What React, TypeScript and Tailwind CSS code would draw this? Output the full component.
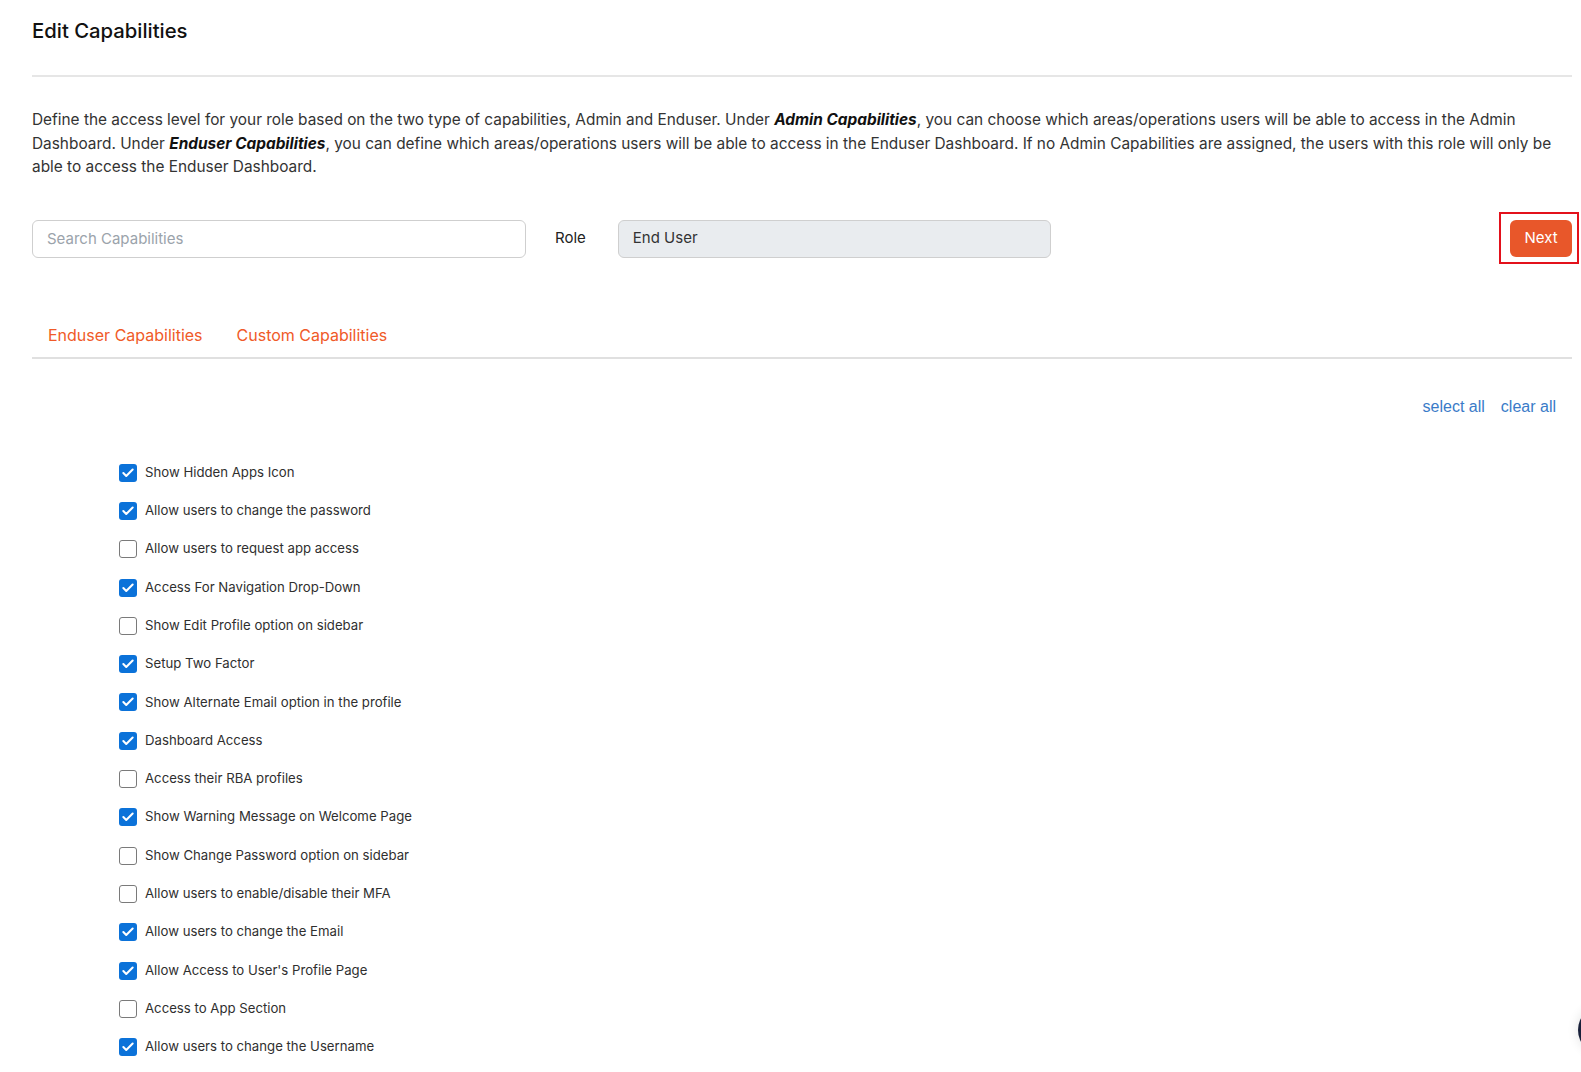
import { useState } from 'react';
import { Check } from 'lucide-react';

const capabilities = [
    { id: 'hidden_apps', label: 'Show Hidden Apps Icon', checked: true },
    { id: 'change_password', label: 'Allow users to change the password', checked: true },
    { id: 'request_app', label: 'Allow users to request app access', checked: false },
    { id: 'nav_dropdown', label: 'Access For Navigation Drop-Down', checked: true },
    { id: 'edit_profile_sidebar', label: 'Show Edit Profile option on sidebar', checked: false },
    { id: 'two_factor', label: 'Setup Two Factor', checked: true },
    { id: 'alt_email', label: 'Show Alternate Email option in the profile', checked: true },
    { id: 'dashboard', label: 'Dashboard Access', checked: true },
    { id: 'rba_profiles', label: 'Access their RBA profiles', checked: false },
    { id: 'warning_msg', label: 'Show Warning Message on Welcome Page', checked: true },
    { id: 'change_password_sidebar', label: 'Show Change Password option on sidebar', checked: false },
    { id: 'toggle_mfa', label: 'Allow users to enable/disable their MFA', checked: false },
    { id: 'change_email', label: 'Allow users to change the Email', checked: true },
    { id: 'profile_page', label: "Allow Access to User's Profile Page", checked: true },
    { id: 'app_section', label: 'Access to App Section', checked: false },
    { id: 'change_username', label: 'Allow users to change the Username', checked: true },
];

function CapabilityCheckbox({ label, checked, onToggle }: { label: string; checked: boolean; onToggle: () => void }) {
    return (
        <label className="h-[38.3px] flex items-center gap-[8px] cursor-pointer select-none">
            <span
                onClick={onToggle}
                className={
                    checked
                        ? 'w-[18px] h-[18px] rounded-[3px] bg-[#0b72d9] flex items-center justify-center'
                        : 'w-[18px] h-[18px] rounded-[3px] border border-[#7a7a7a] bg-white'
                }
            >
                {checked && <Check size={14} strokeWidth={3.5} className="text-white" />}
            </span>
            <span className="text-[13.2px] text-[#2f2f2f]">{label}</span>
        </label>
    );
}

export default function App() {
    const [items, setItems] = useState(capabilities);
    const [tab, setTab] = useState<'enduser' | 'custom'>('enduser');

    const toggle = (id: string) =>
        setItems((prev) => prev.map((c) => (c.id === id ? { ...c, checked: !c.checked } : c)));

    return (
        <div className="relative h-[1072px] overflow-hidden bg-white font-['Inter',sans-serif] text-[#222]">
            <div className="pl-8 pr-[9px]">
                <header className="pt-[17px] pb-[30px] border-b-2 border-[#e6e6e6]">
                    <h1 className="text-[20.3px] leading-7 text-[#111] font-medium">Edit Capabilities</h1>
                </header>

                <p className="mt-[31px] text-[15.4px] leading-[23.5px] text-[#333]">
                    Define the access level for your role based on the two type of capabilities, Admin and Enduser. Under{' '}
                    <b className="italic font-bold text-[#111]">Admin Capabilities</b>, you can choose which areas/operations
                    users will be able to access in the Admin Dashboard. Under{' '}
                    <b className="italic font-bold text-[#111]">Enduser Capabilities</b>, you can define which areas/operations
                    users will be able to access in the Enduser Dashboard. If no Admin Capabilities are assigned, the users
                    with this role will only be able to access the Enduser Dashboard.
                </p>

                <div className="mt-[41px] flex items-center">
                    <input
                        placeholder="Search Capabilities"
                        className="w-[494px] h-[38px] px-[14px] border border-[#cfcfcf] rounded-md text-[15px] text-[#333] placeholder:text-[#9ba3ab] outline-none"
                    />
                    <span className="ml-[29px] text-[15px] text-[#222]">Role</span>
                    <div className="ml-[32px] w-[433px] h-[38px] px-[14px] flex items-center bg-[#e9ecef] border border-[#cfcfcf] rounded-md text-[15px] text-[#333]">
                        End User
                    </div>
                    <div className="relative ml-auto">
                        <span className="absolute -left-[11px] -top-[8px] -right-[7px] -bottom-[7px] border-2 border-[#e3111b] pointer-events-none" />
                        <button className="h-[37px] w-[62px] bg-[#e8572a] hover:bg-[#d94c20] text-white text-[15px] rounded-md">
                            Next
                        </button>
                    </div>
                </div>

                <nav className="mt-[55px] flex border-b-2 border-[#e0e0e0]">
                    <button
                        onClick={() => setTab('enduser')}
                        className="px-4 py-[10px] leading-6 text-[16px] text-[#f05a28]"
                    >
                        Enduser Capabilities
                    </button>
                    <button
                        onClick={() => setTab('custom')}
                        className="px-[18px] py-[10px] leading-6 text-[16px] text-[#f05a28]"
                    >
                        Custom Capabilities
                    </button>
                </nav>

                <div className="mt-[36px] flex justify-end gap-4 pr-4 font-['Liberation_Sans',sans-serif] text-[16px] leading-6 text-[#3a7bc8]">
                    <button onClick={() => setItems((p) => p.map((c) => ({ ...c, checked: true })))}>select all</button>
                    <button onClick={() => setItems((p) => p.map((c) => ({ ...c, checked: false })))}>clear all</button>
                </div>

                {tab === 'enduser' && (
                    <div className="mt-[35px] pl-[87px] flex flex-col">
                        {items.map((c) => (
                            <CapabilityCheckbox key={c.id} label={c.label} checked={c.checked} onToggle={() => toggle(c.id)} />
                        ))}
                    </div>
                )}
            </div>

            {/* chat launcher, mostly off the right edge */}
            <div className="absolute left-[1578px] top-[1006px] w-12 h-12 rounded-full bg-[#18203a] shadow-[0_0_12px_rgba(0,0,0,0.12)]" />
        </div>
    );
}
